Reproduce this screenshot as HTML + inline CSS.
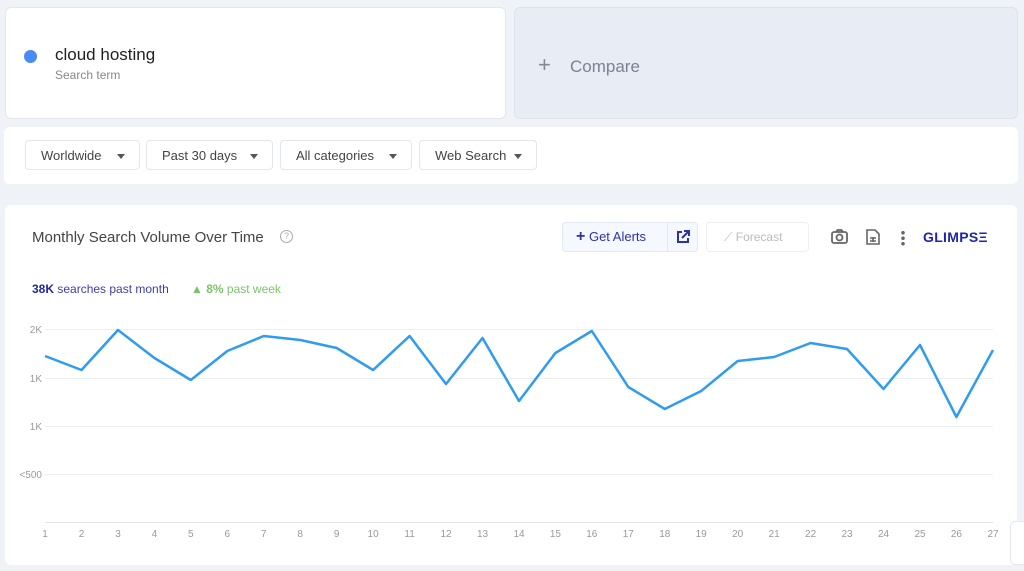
<!DOCTYPE html>
<html><head><meta charset="utf-8"><style>
body{margin:0;width:1024px;height:571px;background:#eff2f7;font-family:"Liberation Sans",sans-serif;position:relative;overflow:hidden}
.card{position:absolute;background:#fff;border-radius:6px}
.dd{position:absolute;top:140px;height:30px;border:1px solid #e3e6ec;border-radius:4px;font-size:13px;color:#444;line-height:30px;padding-left:15px;box-sizing:border-box}
.dd:after{content:"";position:absolute;right:14px;top:13px;border:4px solid transparent;border-top:5px solid #555}
.xl{position:absolute;top:527px;font-size:10px;color:#999;width:20px;text-align:center}
</style></head><body>
<div class="card" style="left:5px;top:7px;width:501px;height:112px;border:1px solid #e3e6ec;box-sizing:border-box"></div>
<div style="position:absolute;left:24px;top:50px;width:13px;height:13px;border-radius:50%;background:#4a8af4"></div>
<div style="position:absolute;left:55px;top:45px;font-size:17px;color:#222">cloud hosting</div>
<div style="position:absolute;left:55px;top:68px;font-size:12px;color:#888">Search term</div>
<div class="card" style="left:514px;top:7px;width:504px;height:112px;background:#e8ecf5;border:1px solid #dde2ec;box-sizing:border-box"></div>
<div style="position:absolute;left:538px;top:52px;font-size:22px;color:#888;font-weight:300">+</div>
<div style="position:absolute;left:570px;top:57px;font-size:17px;color:#7b8190">Compare</div>
<div class="card" style="left:4px;top:127px;width:1014px;height:57px"></div>
<div class="dd" style="left:25px;width:115px">Worldwide</div>
<div class="dd" style="left:146px;width:127px">Past 30 days</div>
<div class="dd" style="left:280px;width:132px">All categories</div>
<div class="dd" style="left:419px;width:118px">Web Search</div>
<div class="card" style="left:5px;top:205px;width:1012px;height:360px"></div>
<div style="position:absolute;left:32px;top:229px;font-size:15px;color:#444">Monthly Search Volume Over Time</div>
<div style="position:absolute;left:280px;top:230px;width:11px;height:11px;border:1.5px solid #aaa;border-radius:50%;font-size:9px;color:#aaa;text-align:center;line-height:11px">?</div>
<div style="position:absolute;left:32px;top:282px;font-size:12px;color:#3a3fae"><b style="color:#22279a">38K</b> searches past month</div>
<div style="position:absolute;left:191px;top:282px;font-size:12px;color:#7cc36a"><b>▲ 8%</b> past week</div>
<div style="position:absolute;left:562px;top:222px;width:136px;height:30px;border:1px solid #e3e8f3;border-radius:4px;background:#f5f8fe;box-sizing:border-box"></div>
<div style="position:absolute;left:667px;top:222px;width:1px;height:30px;background:#e3e8f3"></div>
<div style="position:absolute;left:576px;top:229px;font-size:13px;color:#2b33a8"><b style="font-size:16px;line-height:13px">+</b> Get Alerts</div>
<svg style="position:absolute;left:676px;top:230px" width="14" height="14" viewBox="0 0 14 14" fill="none" stroke="#2b33a8" stroke-width="2"><path d="M6 2H2v10h10V8M8 1h5v5M13 1L6 8"/></svg>
<div style="position:absolute;left:706px;top:222px;width:103px;height:30px;border:1px solid #eef0f4;border-radius:4px;box-sizing:border-box"></div>
<div style="position:absolute;left:724px;top:230px;font-size:12px;color:#bbb">⟋ Forecast</div>
<svg style="position:absolute;left:831px;top:229px" width="17" height="15" viewBox="0 0 17 15" fill="none" stroke="#666" stroke-width="1.8"><rect x="1" y="3" width="15" height="11" rx="2"/><circle cx="8.5" cy="8.5" r="3"/><path d="M5 3l1.5-2h4L12 3"/></svg>
<svg style="position:absolute;left:866px;top:229px" width="14" height="16" viewBox="0 0 14 16" fill="none" stroke="#666" stroke-width="1.6"><path d="M1 1h8l4 4v10H1z"/><path d="M4 9h6M4 12h6M7 8v5"/></svg>
<div style="position:absolute;left:901px;top:230px;width:4px;height:16px;background:radial-gradient(circle,#666 1.6px,transparent 2px) 0 0/4px 5.5px"></div>
<div style="position:absolute;left:923px;top:229px;font-size:14px;font-weight:bold;color:#1d26b0;letter-spacing:0.3px">GLIMPS<span style="letter-spacing:0">Ξ</span></div>
<svg style="position:absolute;left:0;top:0" width="1024" height="571">
<g stroke="#eceef2" stroke-width="1"><line x1="45" x2="993" y1="329.5" y2="329.5"/><line x1="45" x2="993" y1="378.5" y2="378.5"/><line x1="45" x2="993" y1="426.5" y2="426.5"/><line x1="45" x2="993" y1="474.5" y2="474.5"/><line x1="45" x2="993" y1="522.5" y2="522.5" stroke="#e3e5ea"/></g>
<g font-size="10" fill="#999" font-family="Liberation Sans" text-anchor="end"><text x="42" y="333">2K</text><text x="42" y="382">1K</text><text x="42" y="430">1K</text><text x="42" y="478">&lt;500</text></g>
<polyline fill="none" stroke="#2f9cf0" stroke-width="2.5" stroke-linejoin="round" points="45,356 81.5,370 118,330 154.4,358 190.8,380 227.3,351 263.8,336 300.2,340 336.7,348 373.1,370 409.6,336 446,384 482.5,338 519,401 555.4,353 591.8,331 628.3,387 664.8,409 701.2,391 737.7,361 774.1,357 810.6,343 847,349 883.5,389 920,345 956.4,417 993,350"/>
<g font-size="10" fill="#999" font-family="Liberation Sans" text-anchor="middle">
<text x="45" y="537">1</text><text x="81.5" y="537">2</text><text x="118" y="537">3</text><text x="154.4" y="537">4</text><text x="190.8" y="537">5</text><text x="227.3" y="537">6</text><text x="263.8" y="537">7</text><text x="300.2" y="537">8</text><text x="336.7" y="537">9</text><text x="373.1" y="537">10</text><text x="409.6" y="537">11</text><text x="446" y="537">12</text><text x="482.5" y="537">13</text><text x="519" y="537">14</text><text x="555.4" y="537">15</text><text x="591.8" y="537">16</text><text x="628.3" y="537">17</text><text x="664.8" y="537">18</text><text x="701.2" y="537">19</text><text x="737.7" y="537">20</text><text x="774.1" y="537">21</text><text x="810.6" y="537">22</text><text x="847" y="537">23</text><text x="883.5" y="537">24</text><text x="920" y="537">25</text><text x="956.4" y="537">26</text><text x="993" y="537">27</text></g>
</svg>
<div style="position:absolute;left:1010px;top:521px;width:20px;height:42px;background:#fff;border:1px solid #e3e6ec;border-radius:5px"></div>
</body></html>
